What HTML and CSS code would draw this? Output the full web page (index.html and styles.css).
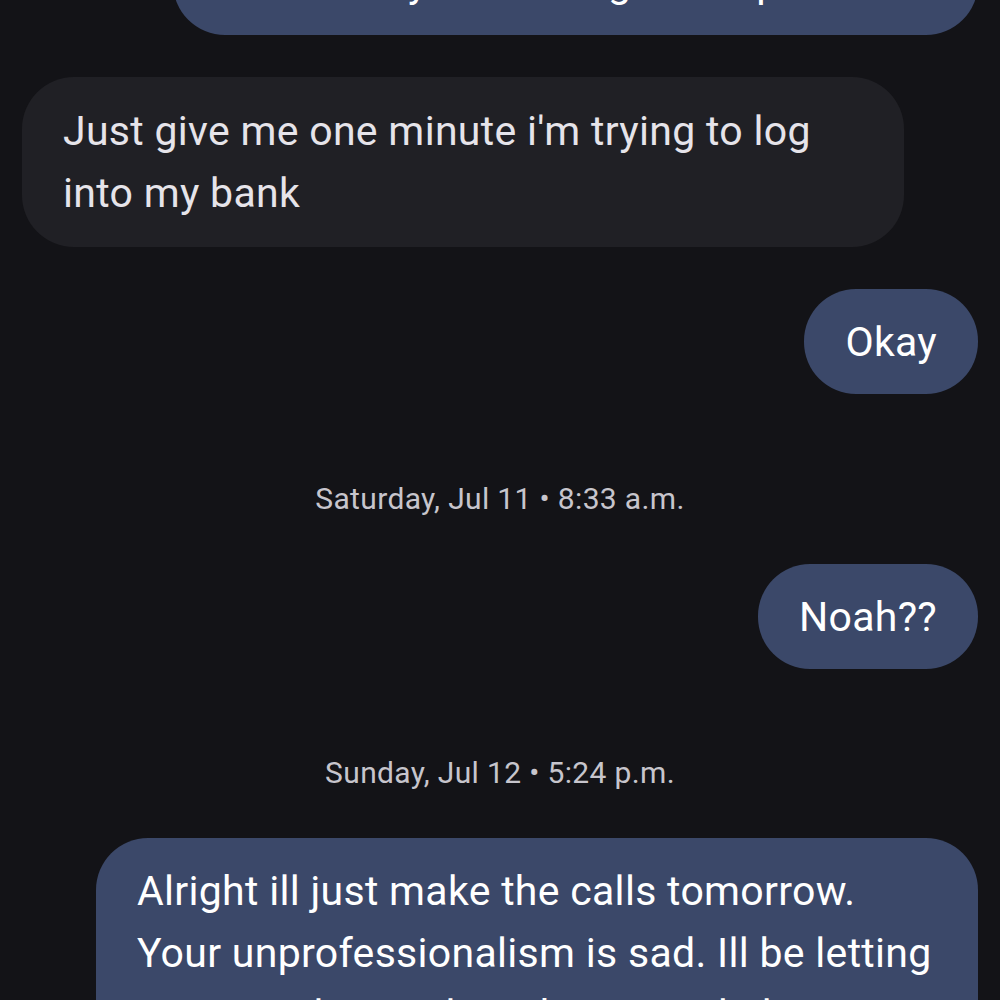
FILE: index.html
```html
<!DOCTYPE html>
<html lang="en">
<head>
    <meta charset="UTF-8">
    <meta name="viewport" content="width=device-width, initial-scale=1.0">
    <title>Messages</title>
    <link rel="stylesheet" href="styles.css">
</head>
<body>

    <div class="thread">
        <div class="bubble sent first">Text me if you're doing the deposit now</div>

        <div class="bubble received">Just give me one minute i'm trying to log into my bank</div>

        <div class="bubble sent">Okay</div>

        <div class="stamp stamp-sat">Saturday, Jul 11 • 8:33 a.m.</div>

        <div class="bubble sent">Noah??</div>

        <div class="stamp stamp-sun">Sunday, Jul 12 • 5:24 p.m.</div>

        <div class="bubble sent">Alright ill just make the calls tomorrow. Your unprofessionalism is sad. Ill be letting everyone know about how you do business</div>
    </div>

</body>
</html>
```

FILE: styles.css
```css
/* page */
html, body {
    margin: 0;
    background: #131317;
    height: 100%;
    overflow: hidden;
}
.thread {
    display: flex;
    flex-direction: column;
    padding: 0 22px;
    font-family: Roboto, "Noto Sans", sans-serif;
}
/* message bubbles */
.bubble {
    max-width: 800px;
    padding: 22px 41px 21px;
    font-size: 41px;
    line-height: 62px;
    letter-spacing: 0.3px;
    border-radius: 52px;
    margin-bottom: 42px;
}
.sent {
    align-self: flex-end;
    background: #3b4869;
    color: #ffffff;
}
.received {
    align-self: flex-start;
    background: #202025;
    color: #e6e4ea;
    padding-top: 23px;
    padding-bottom: 23px;
}
.first {
    margin-top: -70px;
}
/* date separators */
.stamp {
    align-self: center;
    font-size: 30px;
    line-height: 36px;
    letter-spacing: 0.35px;
    color: #c7c5cc;
}
.stamp-sat {
    margin-top: 45px;
    margin-bottom: 47px;
}
.stamp-sun {
    margin-top: 44px;
    margin-bottom: 47px;
}
```
